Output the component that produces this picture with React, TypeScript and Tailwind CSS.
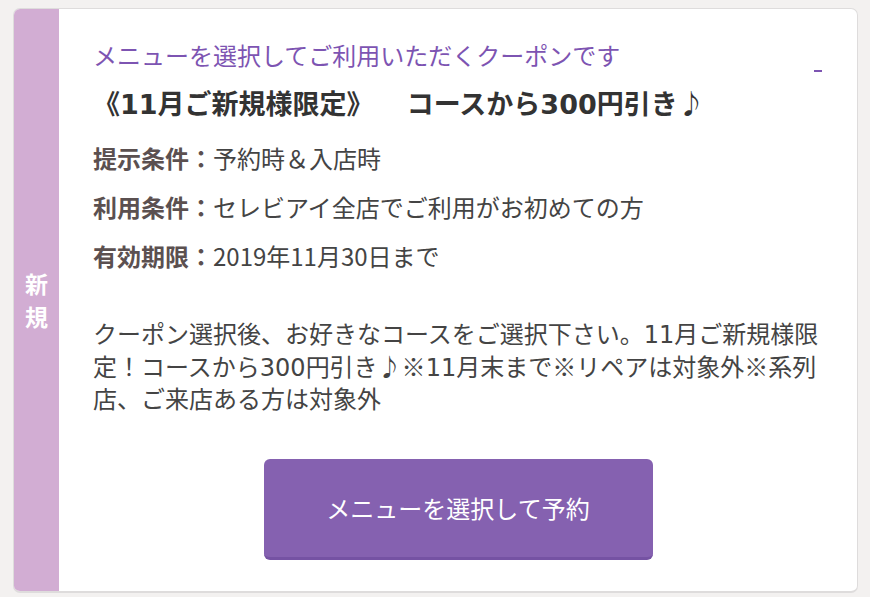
const jp = '"Noto Sans CJK JP", "Noto Sans", sans-serif';

// Latin digits are wider in the reference than Noto's, DejaVu is closer
function Num({ children }: { children: string }) {
  return <span className="font-['DejaVu_Sans',sans-serif] leading-none">{children}</span>;
}

const conditions = [
  { label: '提示条件', value: <>予約時＆入店時</> },
  { label: '利用条件', value: <>セレビアイ全店でご利用がお初めての方</> },
  { label: '有効期限', value: <>2019年11月30日まで</> },
];

export default function App() {
  return (
    <div
      className="min-h-[597px] bg-[#f3f1f0] pt-[8px] pl-[13px] [text-spacing-trim:space-all]"
      style={{ fontFamily: jp }}
    >
      <div className="relative flex h-[585px] w-[845px] overflow-hidden rounded-[7px] border border-[#dedcdc] border-b-2 bg-white">
        <div className="flex w-[45px] shrink-0 items-center justify-center bg-[#d2add3]">
          <div className="text-center text-[23px] font-bold leading-[33px] text-white">
            新<br />規
          </div>
        </div>

        <div className="flex flex-1 flex-col">
          <div className="pt-[28px] pl-[34px] pr-[14px]">
            <p className="text-[24px] leading-[36px] text-[#7d54b2]">
              メニューを選択してご利用いただくクーポンです
            </p>
            <h2 className="mt-[12px] h-[36px] text-[27px] font-bold leading-[36px] text-[#333]">
              《<Num>11</Num>月ご新規様限定》　 コースから<Num>300</Num>円引き♪
            </h2>

            <dl className="mt-[19px] flex flex-col gap-[13px]">
              {conditions.map((c) => (
                <div key={c.label} className="flex text-[24px] leading-[36px]">
                  <dt className="font-bold text-[#5b5050]">{c.label}：</dt>
                  <dd className="text-[#444]">{c.value}</dd>
                </div>
              ))}
            </dl>

            <p className="mt-[43px] h-[97.5px] w-[750px] text-[24px] leading-[32.5px] text-[#444]">
              クーポン選択後、お好きなコースをご選択下さい。<Num>11</Num>月ご新規様限定！コースから<Num>300</Num>
              円引き♪※<Num>11</Num>月末まで※リペアは対象外※系列店、ご来店ある方は対象外
            </p>
          </div>

          <div className="mt-[44px] flex justify-center">
            <button className="h-[101px] w-[389px] rounded-[6px] border-b-[3px] border-[#7552a3] bg-[#8561b0] text-[24px] text-white">
              メニューを選択して予約
            </button>
          </div>
        </div>

        <span className="absolute top-[61px] right-[35px] h-[2px] w-[8px] bg-[#7d54b2]" />
      </div>
    </div>
  );
}
